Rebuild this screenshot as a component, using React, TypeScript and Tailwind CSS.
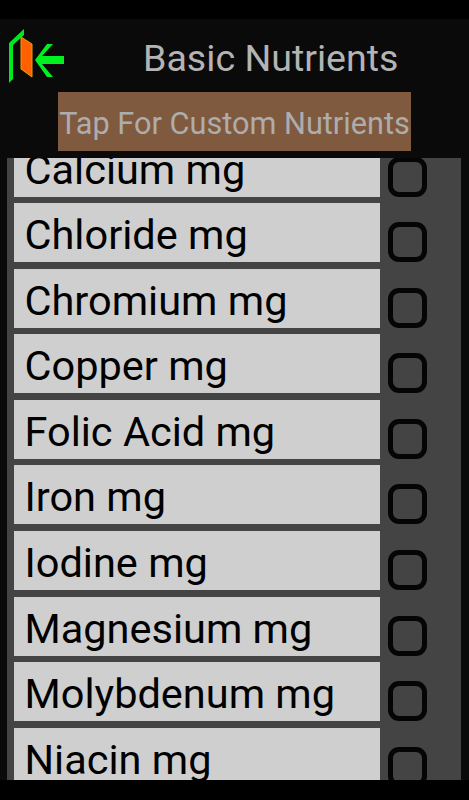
const items = ["Calcium mg","Chloride mg","Chromium mg","Copper mg","Folic Acid mg","Iron mg","Iodine mg","Magnesium mg","Molybdenum mg","Niacin mg"];

function Logo() {
  return (
    <svg width="70" height="60" viewBox="0 28 70 60" className="shrink-0">
      <path d="M9 43 L24 29 L24 35 L13 45 L13 79 L9 83 Z" fill="#00e81f" />
      <path d="M21 37 L32 44 L32 77 L21 69 Z" fill="#ff6000" stroke="#e8a000" strokeWidth="1" />
      <path d="M35 60 L47 44 L53 44 L42 56 L64 56 L64 64 L42 64 L53 77 L47 77 Z" fill="#00f020" />
    </svg>
  );
}

export default function App() {
  return (
    <div className="w-[469px] h-[800px] bg-[#0a0a0a] flex flex-col overflow-hidden font-['Roboto',sans-serif]">
      <div className="h-[19px] bg-black shrink-0" />
      <div className="h-[73px] shrink-0 flex items-start">
        <div className="pt-[9px]"><Logo /></div>
        <div className="text-[37.6px] leading-[78px] text-[#b4b4b4] ml-[73px] whitespace-nowrap">Basic Nutrients</div>
      </div>
      <div className="h-[66px] shrink-0 pl-[58px]">
        <div className="w-[353px] h-[59px] bg-[#7f5a3f] text-[#adadad] text-[30.7px] leading-[63px] text-center whitespace-nowrap">Tap For Custom Nutrients</div>
      </div>
      <div className="ml-[7px] w-[454px] h-[622px] shrink-0 bg-[#444444] pl-[7px] overflow-hidden">
        <div className="-mt-[20.5px] flex flex-col gap-[6.6px]">
          {items.map((t) => (
            <div key={t} className="flex items-end h-[59px] shrink-0">
              <div className="w-[366px] h-full bg-[#cfcfcf] text-black text-[41.5px] leading-[63px] pl-[10.5px] whitespace-nowrap">{t}</div>
              <div className="ml-[8px] w-[39px] h-[40px] rounded-[11px] border-[5px] border-[#050505]" />
            </div>
          ))}
        </div>
      </div>
      <div className="flex-1 bg-black" />
    </div>
  );
}
